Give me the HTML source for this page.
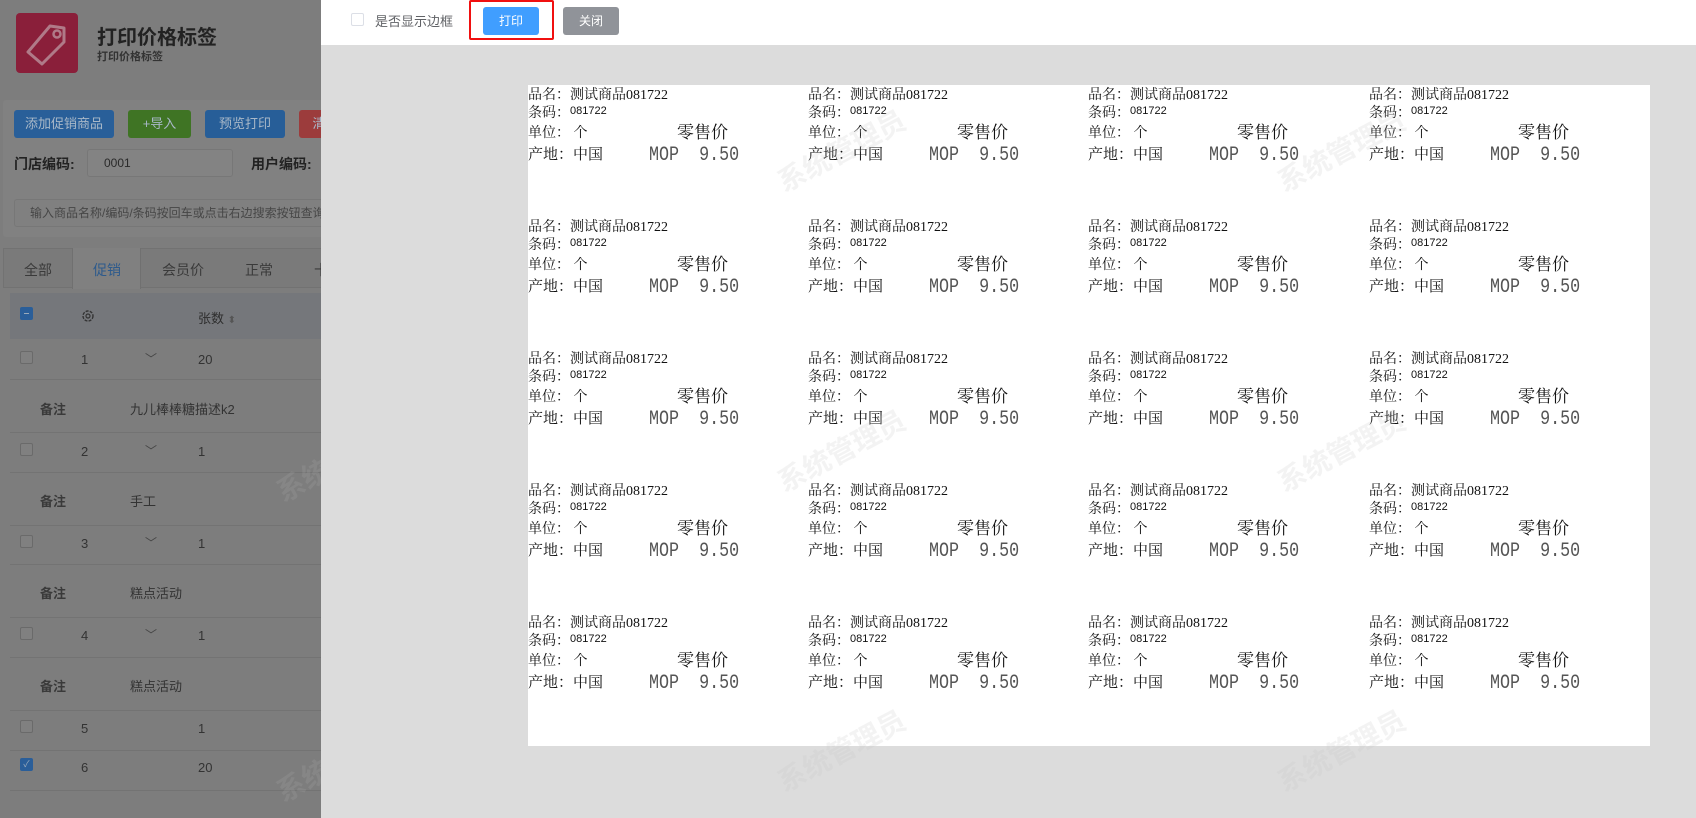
<!DOCTYPE html>
<html><head><meta charset="utf-8"><style>
*{margin:0;padding:0;box-sizing:border-box}
body{width:1696px;height:818px;overflow:hidden;position:relative;background:#7b7b7b;font-family:"Liberation Sans","Noto Sans CJK SC",sans-serif;color:#333}
.a{position:absolute;white-space:nowrap}
.left{position:absolute;left:0;top:0;width:321px;height:818px;background:#7d7d7d;overflow:hidden}
.btn{position:absolute;top:110px;height:28px;border-radius:3px;color:#a9b8c8;font-size:13px;text-align:center;line-height:28px}
.row{position:absolute;left:10px;width:320px;border-bottom:1px solid #737373;font-size:13px;color:#2e2e2e}
.cb{position:absolute;width:13px;height:13px;border:1px solid #6a6a6a;border-radius:2px;background:#808080}
.panel{position:absolute;left:321px;top:0;width:1375px;height:818px;background:#dcdcdc}
.top{position:absolute;left:0;top:0;width:1375px;height:45px;background:#fff}
.paper{position:absolute;left:207px;top:85px;width:1122px;height:661px;background:#fff}
.lb{position:absolute;width:270px;height:80px;font-family:"Liberation Serif","Noto Serif CJK SC",serif;color:#111}
.lb span{position:absolute;white-space:pre;line-height:1}
.l1{left:0;top:4px;font-size:14px}
.l2{left:0;top:22px;font-size:14px}
.l2 i{font-style:normal;font-size:11px;position:relative;top:-3px;font-family:"Liberation Sans",sans-serif}
.l3{left:0;top:42px;font-size:14px}
.l4{left:0;top:63px;font-size:15px}
.rp{left:149px;top:39px;font-size:17px}
.mop{left:121px;top:62px;font-family:"Liberation Mono",monospace;font-size:16.7px;color:#555;transform:scaleY(1.2);transform-origin:0 0}
.wm{position:absolute;font-size:28px;color:rgba(180,180,180,0.18);transform:rotate(-28deg);white-space:nowrap;font-weight:bold}
</style></head><body>
<div class="left">
 <div class="a" style="left:16px;top:13px;width:62px;height:60px;background:#8a1f3a;border-radius:4px"></div>
 <svg class="a" style="left:20px;top:18px" width="52" height="52" viewBox="0 0 52 52"><path d="M8 34 L30 8 L44 10 L44 24 L22 46 Z" fill="none" stroke="#b07a88" stroke-width="3" stroke-linejoin="round"/><circle cx="37" cy="16" r="3.5" fill="none" stroke="#b07a88" stroke-width="2.5"/></svg>
 <div class="a" style="left:97px;top:21px;font-size:20px;font-weight:bold;color:#222">打印价格标签</div>
 <div class="a" style="left:97px;top:48px;font-size:11px;font-weight:bold;color:#333">打印价格标签</div>
 <div class="a" style="left:3px;top:100px;width:330px;height:137px;background:#818181;border-radius:3px"></div>
 <div class="btn" style="left:14px;width:100px;background:#295f99">添加促销商品</div>
 <div class="btn" style="left:128px;width:63px;background:#3f7424">+导入</div>
 <div class="btn" style="left:205px;width:80px;background:#275e98">预览打印</div>
 <div class="btn" style="left:299px;width:40px;background:#9c3c3c">清</div>
 <div class="a" style="left:14px;top:154px;font-size:14px;font-weight:bold;color:#222">门店编码:</div>
 <div class="a" style="left:87px;top:149px;width:146px;height:28px;border:1px solid #777;background:#838383;border-radius:3px;font-size:12px;line-height:26px;padding-left:16px;color:#2a2a2a">0001</div>
 <div class="a" style="left:251px;top:154px;font-size:14px;font-weight:bold;color:#222">用户编码:</div>
 <div class="a" style="left:14px;top:199px;width:320px;height:28px;border:1px solid #777;background:#808080;border-radius:3px;font-size:12px;line-height:26px;padding-left:15px;color:#464646">输入商品名称/编码/条码按回车或点击右边搜索按钮查询</div>
 <div class="a" style="left:3px;top:248px;width:330px;height:40px;background:#7a7a7a;border:1px solid #727272"></div>
 <div class="a" style="left:72px;top:248px;width:69px;height:41px;background:#808080;border-left:1px solid #707070;border-right:1px solid #707070"></div>
 <div class="a" style="left:24px;top:260px;font-size:14px;color:#3a3a3a">全部</div>
 <div class="a" style="left:93px;top:260px;font-size:14px;color:#2d5a8c">促销</div>
 <div class="a" style="left:162px;top:260px;font-size:14px;color:#3a3a3a">会员价</div>
 <div class="a" style="left:245px;top:260px;font-size:14px;color:#3a3a3a">正常</div>
 <div class="a" style="left:314px;top:260px;font-size:14px;color:#3a3a3a">十</div>
 <div class="a" style="left:10px;top:293px;width:320px;height:46px;background:#75777b"></div>
 <div class="cb" style="left:20px;top:307px;background:#2a5e99;border-color:#2a5e99"><div style="position:absolute;left:3px;top:5px;width:5px;height:1px;background:#9ab"></div></div>
 <svg class="a" style="left:81px;top:309px" width="14" height="14" viewBox="0 0 14 14"><circle cx="7" cy="7" r="5" fill="none" stroke="#333" stroke-width="1.4" stroke-dasharray="3 1.2"/><circle cx="7" cy="7" r="2" fill="none" stroke="#333" stroke-width="1.2"/></svg>
 <div class="a" style="left:198px;top:308px;font-size:13px;color:#2e2e2e">张数 <span style="color:#555;font-size:10px">⬍</span></div>
 <div class="row" style="top:340px;height:40px"></div>
 <div class="row" style="top:380px;height:53px"></div>
 <div class="row" style="top:433px;height:40px"></div>
 <div class="row" style="top:473px;height:53px"></div>
 <div class="row" style="top:526px;height:39px"></div>
 <div class="row" style="top:565px;height:53px"></div>
 <div class="row" style="top:618px;height:40px"></div>
 <div class="row" style="top:658px;height:53px"></div>
 <div class="row" style="top:711px;height:40px"></div>
 <div class="row" style="top:751px;height:40px"></div>
 <div class="cb" style="left:20px;top:351px"></div><div class="a" style="left:81px;top:352px;font-size:13px">1</div><div class="a" style="left:145px;top:350px;font-size:12px;color:#444">﹀</div><div class="a" style="left:198px;top:352px;font-size:13px">20</div>
 <div class="a" style="left:40px;top:399px;font-size:13px;font-weight:bold;color:#3a3a3a">备注</div><div class="a" style="left:130px;top:399px;font-size:13px">九儿棒棒糖描述k2</div>
 <div class="cb" style="left:20px;top:443px"></div><div class="a" style="left:81px;top:444px;font-size:13px">2</div><div class="a" style="left:145px;top:442px;font-size:12px;color:#444">﹀</div><div class="a" style="left:198px;top:444px;font-size:13px">1</div>
 <div class="a" style="left:40px;top:491px;font-size:13px;font-weight:bold;color:#3a3a3a">备注</div><div class="a" style="left:130px;top:491px;font-size:13px">手工</div>
 <div class="cb" style="left:20px;top:535px"></div><div class="a" style="left:81px;top:536px;font-size:13px">3</div><div class="a" style="left:145px;top:534px;font-size:12px;color:#444">﹀</div><div class="a" style="left:198px;top:536px;font-size:13px">1</div>
 <div class="a" style="left:40px;top:583px;font-size:13px;font-weight:bold;color:#3a3a3a">备注</div><div class="a" style="left:130px;top:583px;font-size:13px">糕点活动</div>
 <div class="cb" style="left:20px;top:627px"></div><div class="a" style="left:81px;top:628px;font-size:13px">4</div><div class="a" style="left:145px;top:626px;font-size:12px;color:#444">﹀</div><div class="a" style="left:198px;top:628px;font-size:13px">1</div>
 <div class="a" style="left:40px;top:676px;font-size:13px;font-weight:bold;color:#3a3a3a">备注</div><div class="a" style="left:130px;top:676px;font-size:13px">糕点活动</div>
 <div class="cb" style="left:20px;top:720px"></div><div class="a" style="left:81px;top:721px;font-size:13px">5</div><div class="a" style="left:198px;top:721px;font-size:13px">1</div>
 <div class="cb" style="left:20px;top:758px;background:#2a5e99;border-color:#2a5e99;color:#9ab;font-size:9px;line-height:11px;text-align:center">✓</div><div class="a" style="left:81px;top:760px;font-size:13px">6</div><div class="a" style="left:198px;top:760px;font-size:13px">20</div>
 <div class="wm" style="left:270px;top:440px">系统管理员</div>
 <div class="wm" style="left:270px;top:740px">系统管理员</div>
</div>
<div class="panel">
 <div class="top">
  <div class="a" style="left:30px;top:13px;width:13px;height:13px;border:1px solid #dcdfe6;border-radius:2px"></div>
  <div class="a" style="left:54px;top:11px;font-size:13px;color:#606266">是否显示边框</div>
  <div class="a" style="left:148px;top:0;width:85px;height:40px;border:2px solid #f01010;border-radius:2px"></div>
  <div class="a" style="left:162px;top:7px;width:56px;height:28px;background:#409eff;border-radius:3px;color:#fff;font-size:12px;text-align:center;line-height:28px">打印</div>
  <div class="a" style="left:242px;top:7px;width:56px;height:28px;background:#909399;border-radius:3px;color:#fff;font-size:12px;text-align:center;line-height:28px">关闭</div>
 </div>
 <div class="paper">
<div class="lb" style="left:0;top:0"><span class="l1">品名：测试商品081722</span><span class="l2">条码：<i>081722</i></span><span class="l3">单位： 个</span><span class="rp">零售价</span><span class="l4">产地：中国</span><span class="mop">MOP  9.50</span></div>
<div class="lb" style="left:280px;top:0"><span class="l1">品名：测试商品081722</span><span class="l2">条码：<i>081722</i></span><span class="l3">单位： 个</span><span class="rp">零售价</span><span class="l4">产地：中国</span><span class="mop">MOP  9.50</span></div>
<div class="lb" style="left:560px;top:0"><span class="l1">品名：测试商品081722</span><span class="l2">条码：<i>081722</i></span><span class="l3">单位： 个</span><span class="rp">零售价</span><span class="l4">产地：中国</span><span class="mop">MOP  9.50</span></div>
<div class="lb" style="left:841px;top:0"><span class="l1">品名：测试商品081722</span><span class="l2">条码：<i>081722</i></span><span class="l3">单位： 个</span><span class="rp">零售价</span><span class="l4">产地：中国</span><span class="mop">MOP  9.50</span></div>
<div class="lb" style="left:0;top:132px"><span class="l1">品名：测试商品081722</span><span class="l2">条码：<i>081722</i></span><span class="l3">单位： 个</span><span class="rp">零售价</span><span class="l4">产地：中国</span><span class="mop">MOP  9.50</span></div>
<div class="lb" style="left:280px;top:132px"><span class="l1">品名：测试商品081722</span><span class="l2">条码：<i>081722</i></span><span class="l3">单位： 个</span><span class="rp">零售价</span><span class="l4">产地：中国</span><span class="mop">MOP  9.50</span></div>
<div class="lb" style="left:560px;top:132px"><span class="l1">品名：测试商品081722</span><span class="l2">条码：<i>081722</i></span><span class="l3">单位： 个</span><span class="rp">零售价</span><span class="l4">产地：中国</span><span class="mop">MOP  9.50</span></div>
<div class="lb" style="left:841px;top:132px"><span class="l1">品名：测试商品081722</span><span class="l2">条码：<i>081722</i></span><span class="l3">单位： 个</span><span class="rp">零售价</span><span class="l4">产地：中国</span><span class="mop">MOP  9.50</span></div>
<div class="lb" style="left:0;top:264px"><span class="l1">品名：测试商品081722</span><span class="l2">条码：<i>081722</i></span><span class="l3">单位： 个</span><span class="rp">零售价</span><span class="l4">产地：中国</span><span class="mop">MOP  9.50</span></div>
<div class="lb" style="left:280px;top:264px"><span class="l1">品名：测试商品081722</span><span class="l2">条码：<i>081722</i></span><span class="l3">单位： 个</span><span class="rp">零售价</span><span class="l4">产地：中国</span><span class="mop">MOP  9.50</span></div>
<div class="lb" style="left:560px;top:264px"><span class="l1">品名：测试商品081722</span><span class="l2">条码：<i>081722</i></span><span class="l3">单位： 个</span><span class="rp">零售价</span><span class="l4">产地：中国</span><span class="mop">MOP  9.50</span></div>
<div class="lb" style="left:841px;top:264px"><span class="l1">品名：测试商品081722</span><span class="l2">条码：<i>081722</i></span><span class="l3">单位： 个</span><span class="rp">零售价</span><span class="l4">产地：中国</span><span class="mop">MOP  9.50</span></div>
<div class="lb" style="left:0;top:396px"><span class="l1">品名：测试商品081722</span><span class="l2">条码：<i>081722</i></span><span class="l3">单位： 个</span><span class="rp">零售价</span><span class="l4">产地：中国</span><span class="mop">MOP  9.50</span></div>
<div class="lb" style="left:280px;top:396px"><span class="l1">品名：测试商品081722</span><span class="l2">条码：<i>081722</i></span><span class="l3">单位： 个</span><span class="rp">零售价</span><span class="l4">产地：中国</span><span class="mop">MOP  9.50</span></div>
<div class="lb" style="left:560px;top:396px"><span class="l1">品名：测试商品081722</span><span class="l2">条码：<i>081722</i></span><span class="l3">单位： 个</span><span class="rp">零售价</span><span class="l4">产地：中国</span><span class="mop">MOP  9.50</span></div>
<div class="lb" style="left:841px;top:396px"><span class="l1">品名：测试商品081722</span><span class="l2">条码：<i>081722</i></span><span class="l3">单位： 个</span><span class="rp">零售价</span><span class="l4">产地：中国</span><span class="mop">MOP  9.50</span></div>
<div class="lb" style="left:0;top:528px"><span class="l1">品名：测试商品081722</span><span class="l2">条码：<i>081722</i></span><span class="l3">单位： 个</span><span class="rp">零售价</span><span class="l4">产地：中国</span><span class="mop">MOP  9.50</span></div>
<div class="lb" style="left:280px;top:528px"><span class="l1">品名：测试商品081722</span><span class="l2">条码：<i>081722</i></span><span class="l3">单位： 个</span><span class="rp">零售价</span><span class="l4">产地：中国</span><span class="mop">MOP  9.50</span></div>
<div class="lb" style="left:560px;top:528px"><span class="l1">品名：测试商品081722</span><span class="l2">条码：<i>081722</i></span><span class="l3">单位： 个</span><span class="rp">零售价</span><span class="l4">产地：中国</span><span class="mop">MOP  9.50</span></div>
<div class="lb" style="left:841px;top:528px"><span class="l1">品名：测试商品081722</span><span class="l2">条码：<i>081722</i></span><span class="l3">单位： 个</span><span class="rp">零售价</span><span class="l4">产地：中国</span><span class="mop">MOP  9.50</span></div>
 </div>
 <div class="wm" style="left:450px;top:130px;color:rgba(200,200,200,0.22)">系统管理员</div>
 <div class="wm" style="left:950px;top:130px;color:rgba(200,200,200,0.22)">系统管理员</div>
 <div class="wm" style="left:450px;top:430px;color:rgba(200,200,200,0.22)">系统管理员</div>
 <div class="wm" style="left:950px;top:430px;color:rgba(200,200,200,0.22)">系统管理员</div>
 <div class="wm" style="left:450px;top:730px;color:rgba(200,200,200,0.22)">系统管理员</div>
 <div class="wm" style="left:950px;top:730px;color:rgba(200,200,200,0.22)">系统管理员</div>
</div>
</body></html>
